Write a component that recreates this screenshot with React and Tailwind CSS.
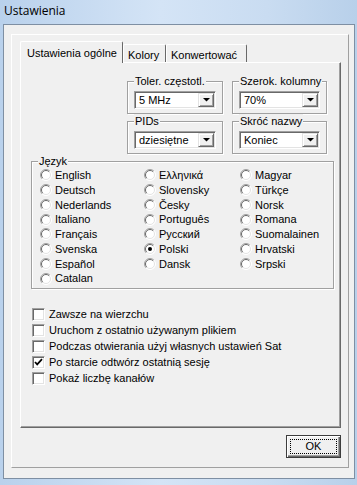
import React from 'react';

const col1 = ['English', 'Deutsch', 'Nederlands', 'Italiano', 'Français', 'Svenska', 'Español', 'Catalan'];
const col2 = ['Ελληνικά', 'Slovensky', 'Česky', 'Português', 'Русский', 'Polski', 'Dansk'];
const col3 = ['Magyar', 'Türkçe', 'Norsk', 'Romana', 'Suomalainen', 'Hrvatski', 'Srpski'];

const options = [
  ['Zawsze na wierzchu', false],
  ['Uruchom z ostatnio używanym plikiem', false],
  ['Podczas otwierania użyj własnych ustawień Sat', false],
  ['Po starcie odtwórz ostatnią sesję', true],
  ['Pokaż liczbę kanałów', false],
];

function Radio({ checked }) {
  return (
    <svg width="12" height="12" viewBox="0 0 12 12" className="shrink-0">
      <circle cx="6" cy="6" r="5.5" fill="#fff" />
      <path d="M2.1 9.9 A5.5 5.5 0 0 1 9.9 2.1" fill="none" stroke="#a0a0a0" strokeWidth="1" />
      <path d="M9.9 2.1 A5.5 5.5 0 0 1 2.1 9.9" fill="none" stroke="#ffffff" strokeWidth="1" />
      <path d="M2.8 9.2 A4.5 4.5 0 0 1 9.2 2.8" fill="none" stroke="#696969" strokeWidth="1" />
      <path d="M9.2 2.8 A4.5 4.5 0 0 1 2.8 9.2" fill="none" stroke="#e3e3e3" strokeWidth="1" />
      {checked && <circle cx="6" cy="6" r="2" fill="#000" />}
    </svg>
  );
}

function Check({ checked }) {
  return (
    <div className="w-[13px] h-[13px] shrink-0 bg-white border border-t-[#a0a0a0] border-l-[#a0a0a0] border-r-white border-b-white shadow-[inset_1px_1px_0_#696969,inset_-1px_-1px_0_#e3e3e3] flex items-center justify-center">
      {checked && (
        <svg width="9" height="9" viewBox="0 0 9 9">
          <polyline points="1,4 3.2,6.4 8,1.2" fill="none" stroke="#000" strokeWidth="1.7" />
        </svg>
      )}
    </div>
  );
}

function Combo({ value }) {
  return (
    <div className="h-[18px] flex bg-white border border-t-[#a0a0a0] border-l-[#a0a0a0] border-r-white border-b-white shadow-[inset_1px_1px_0_#696969,inset_-1px_-1px_0_#e3e3e3] p-[1px]">
      <div className="flex-1 pl-[3px] leading-[14px]">{value}</div>
      <div className="w-[16px] bg-[#f0f0f0] border border-t-[#e3e3e3] border-l-[#e3e3e3] border-r-[#696969] border-b-[#696969] shadow-[inset_1px_1px_0_#fff,inset_-1px_-1px_0_#a0a0a0] flex items-center justify-center">
        <svg width="7" height="4" viewBox="0 0 7 4">
          <polygon points="0,0 7,0 3.5,3.5" fill="#000" />
        </svg>
      </div>
    </div>
  );
}

function Group({ label, className, children }) {
  return (
    <div className={`relative border border-[#a0a0a0] shadow-[inset_1px_1px_0_#fff,1px_1px_0_#fff] ${className}`}>
      <span className="absolute left-[6px] top-[-8px] px-[1px] bg-[#f0f0f0] leading-[14px] whitespace-nowrap">{label}</span>
      {children}
    </div>
  );
}

function RadioCol({ items, checked, className }) {
  return (
    <div className={`flex flex-col ${className}`}>
      {items.map((t) => (
        <div key={t} className="h-[14.75px] flex items-center gap-[3px]">
          <Radio checked={t === checked} />
          <span className="whitespace-nowrap">{t}</span>
        </div>
      ))}
    </div>
  );
}

export default function App() {
  return (
    <div className="w-[357px] h-[485px] flex flex-col bg-[linear-gradient(to_right,#b9d1ec,#d4e4f6_45%,#c9dcf1_75%,#b8d0ea)] font-['Liberation_Sans',Arial,sans-serif] text-[11px] text-black">
      <div className="h-[24px] pl-[4px] pt-[2px] text-[12px] font-['Open_Sans','Noto_Sans',sans-serif]">Ustawienia</div>
      <div className="ml-[3px] mr-[2px] flex-1 flex bg-[#f0f0f0] border border-[#7e8fa3] pl-[7px] pt-[9px] pr-[5px] pb-[10px]">
        <div className="flex-1 flex flex-col border border-t-white border-l-white border-r-[#a0a0a0] border-b-[#a0a0a0] pl-[8px] pt-[6px] pr-[7px] pb-[9px]">
          <div className="h-[21px] flex items-end relative z-10">
            <div className="w-[103px] h-[22px] -mb-px bg-[#f0f0f0] border-l border-t border-r border-l-white border-t-white border-r-[#696969] rounded-t-[2px] pl-[6px] pt-[3px]">Ustawienia ogólne</div>
            <div className="w-[43px] h-[18px] border-l border-t border-r border-l-white border-t-white border-r-[#696969] rounded-t-[2px] pl-[4px] pt-[2px]">Kolory</div>
            <div className="w-[81px] h-[18px] border-l border-t border-r border-l-white border-t-white border-r-[#696969] rounded-t-[2px] pl-[4px] pt-[2px]">Konwertować</div>
          </div>
          <div className="h-[366px] flex flex-col border border-t-white border-l-white border-r-[#696969] border-b-[#696969] shadow-[inset_-1px_-1px_0_#a0a0a0]">
            <div className="grid grid-cols-[96px_95px] gap-x-[9px] gap-y-[7px] ml-[106px] mt-[18px]">
              <Group label="Toler. częstotl." className="h-[33px] px-[6px] pt-[9px]">
                <Combo value="5 MHz" />
              </Group>
              <Group label="Szerok. kolumny" className="h-[33px] px-[6px] pt-[9px]">
                <Combo value="70%" />
              </Group>
              <Group label="PIDs" className="h-[33px] px-[6px] pt-[9px]">
                <Combo value="dziesiętne" />
              </Group>
              <Group label="Skróć nazwy" className="h-[33px] px-[6px] pt-[9px]">
                <Combo value="Koniec" />
              </Group>
            </div>
            <Group label="Język" className="ml-[10px] w-[303px] h-[128px] mt-[7px] pl-[8px] pt-[6px]">
              <div className="flex">
                <RadioCol items={col1} className="w-[104px]" />
                <RadioCol items={col2} checked="Polski" className="w-[96px]" />
                <RadioCol items={col3} />
              </div>
            </Group>
            <div className="mt-[17px] ml-[11px] flex flex-col">
              {options.map(([t, c]) => (
                <div key={t} className="h-[16px] flex items-center gap-[4px]">
                  <Check checked={c} />
                  <span>{t}</span>
                </div>
              ))}
            </div>
          </div>
          <div className="mt-[7px] flex justify-end">
            <div className="w-[55px] h-[23px] border border-[#3c3c3c] bg-[#f0f0f0] shadow-[inset_1px_1px_0_#fff,inset_-1px_-1px_0_#696969,inset_-2px_-2px_0_#a0a0a0] p-[3px] flex">
              <div className="flex-1 border border-dotted border-black flex items-center justify-center">OK</div>
            </div>
          </div>
        </div>
      </div>
      <div className="h-[6px]" />
    </div>
  );
}
